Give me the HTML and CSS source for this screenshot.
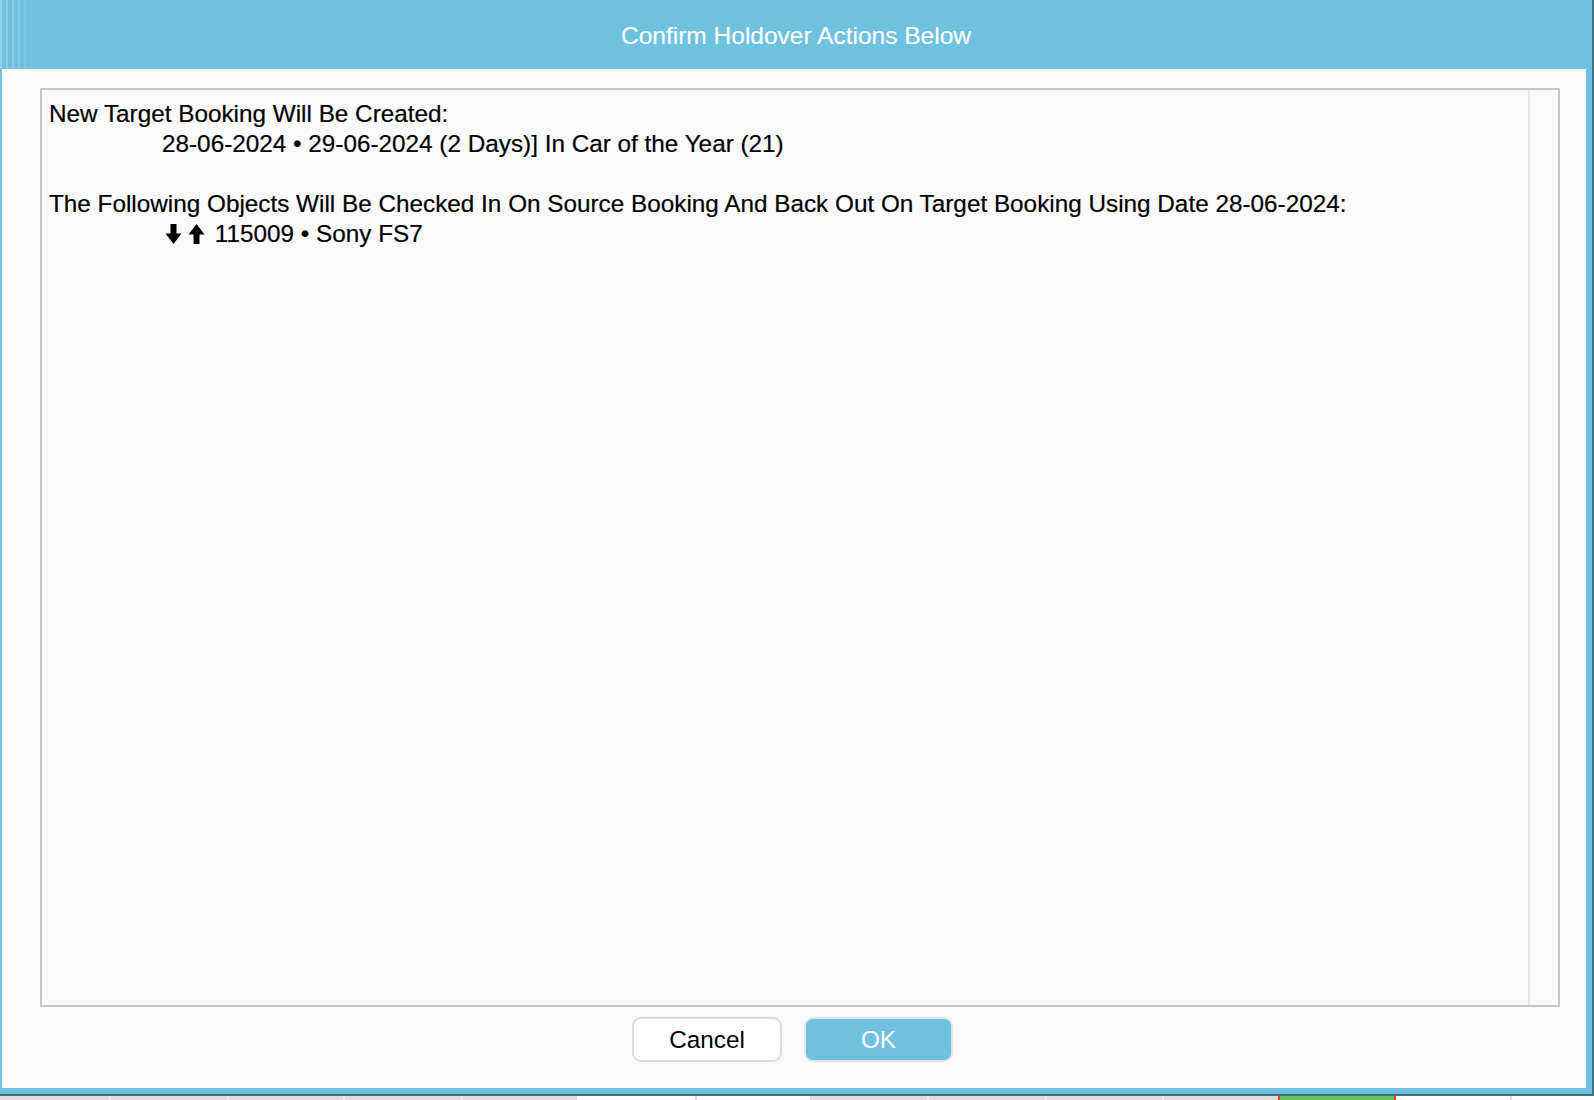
FILE: index.html
```html
<!DOCTYPE html>
<html lang="en">
<head>
<meta charset="utf-8">
<title>Confirm Holdover Actions Below</title>
<link rel="stylesheet" href="styles.css">
</head>
<body>
<div class="screen">
  <div class="dialog">
    <div class="titlebar">
      <span class="title">Confirm Holdover Actions Below</span>
    </div>
    <div class="dialog-body">
      <div class="textbox">
        <div class="content">
          <div class="line">New Target Booking Will Be Created:</div>
          <div class="line indent">28-06-2024 • 29-06-2024 (2 Days)] In Car of the Year (21)</div>
          <div class="line blank"></div>
          <div class="line">The Following Objects Will Be Checked In On Source Booking And Back Out On Target Booking Using Date 28-06-2024:</div>
          <div class="line indent"><svg class="arrow" width="23" height="22" viewBox="0 0 23 22"><path d="M8.5 1h6v9.5H19.5L11.5 21 3.5 10.5H8.5z"/></svg><svg class="arrow" width="23" height="22" viewBox="0 0 23 22"><path d="M11.5 1 19.5 11.5H14.5V21h-6V11.5H3.5z"/></svg> 115009 • Sony FS7</div>
        </div>
        <div class="scrolltrack"></div>
      </div>
      <div class="buttons">
        <button class="btn btn-cancel">Cancel</button>
        <button class="btn btn-ok">OK</button>
      </div>
    </div>
  </div>
  <div class="strip">
    <div class="cell gray w109"></div><div class="sep"></div>
    <div class="cell gray w116"></div><div class="sep"></div>
    <div class="cell gray w114"></div><div class="sep"></div>
    <div class="cell gray w116"></div><div class="sep"></div>
    <div class="cell gray w114"></div>
    <div class="cell white w118"></div><div class="sep dark"></div>
    <div class="cell white w113"></div>
    <div class="cell gray w117"></div><div class="sep"></div>
    <div class="cell gray w116"></div><div class="sep"></div>
    <div class="cell gray w115"></div><div class="sep"></div>
    <div class="cell gray w114"></div>
    <div class="sep red"></div><div class="cell green w114"></div><div class="sep red"></div>
    <div class="cell white w114"></div><div class="sep dark"></div>
    <div class="cell white grow"></div>
  </div>
</div>
</body>
</html>
```

FILE: styles.css
```css
html, body {
  margin: 0;
  padding: 0;
}

body {
  font-family: "Liberation Sans", Arial, Helvetica, sans-serif;
  background: #dedede;
}

.screen {
  width: 1594px;
  height: 1100px;
  overflow: hidden;
  background: #dedede;
}

.dialog {
  width: 1592px;
  height: 1094px;
  background: #6ec2df;
  display: flex;
  flex-direction: column;
  box-shadow: 2px 0 0 #3e7283, 0 2px 0 #3e7283, 2px 2px 0 #3e7283;
  position: relative;
}

.titlebar {
  position: relative;
  height: 69px;
  flex: none;
  display: flex;
  align-items: center;
  justify-content: center;
  padding-top: 2px;
  box-sizing: border-box;
}

.titlebar::before {
  content: "";
  position: absolute;
  left: 0;
  top: 0;
  width: 36px;
  height: 69px;
  background: repeating-linear-gradient(90deg, rgba(255,255,255,0.28) 0 2px, rgba(255,255,255,0) 2px 6px);
  -webkit-mask-image: linear-gradient(90deg, #000 0%, rgba(0,0,0,0) 100%);
  mask-image: linear-gradient(90deg, #000 0%, rgba(0,0,0,0) 100%);
}

.title {
  color: #ffffff;
  font-size: 24.5px;
  line-height: 30px;
  -webkit-text-stroke: 0.15px #ffffff;
}

.dialog-body {
  flex: 1;
  margin: 0 6px 6px 2px;
  background: #fafafa;
  padding: 19px 26px 26px 38px;
  display: flex;
  flex-direction: column;
  gap: 10px;
  min-height: 0;
}

.textbox {
  flex: 1;
  border: 2px solid #c6c6c6;
  background: #fafafa;
  display: flex;
  min-height: 0;
}

.content {
  flex: 1;
  padding: 9px 7px;
  color: #000;
  font-size: 24.3px;
  line-height: 30px;
  -webkit-text-stroke: 0.2px #000;
}

.line {
  white-space: nowrap;
  height: 30px;
}

.indent {
  padding-left: 113px;
}

.arrow {
  vertical-align: -3px;
  fill: #000;
}

.scrolltrack {
  width: 28px;
  flex: none;
  border-left: 2px solid #e8e8e8;
  background: #fafafa;
}

.buttons {
  height: 45px;
  flex: none;
  display: flex;
  justify-content: center;
  gap: 22px;
  padding-right: 15px;
}

.btn {
  font-family: "Liberation Sans", Arial, Helvetica, sans-serif;
  font-size: 24.3px;
  border-radius: 9px;
  height: 45px;
  padding: 0;
  box-sizing: border-box;
}

.btn-cancel {
  width: 150px;
  background: #ffffff;
  border: 2px solid #dcdcdc;
  color: #000;
}

.btn-ok {
  width: 149px;
  background: #6ec2df;
  border: 2px solid #dde6ea;
  color: #ffffff;
}

.strip {
  margin-top: 2px;
  height: 4px;
  display: flex;
}

.cell { height: 4px; flex: none; }
.gray { background: #dedede; }
.white { background: #ffffff; }
.green { background: #63c655; }
.grow { flex: 1; }
.w109 { width: 109px; }
.w113 { width: 113px; }
.w114 { width: 114px; }
.w115 { width: 115px; }
.w116 { width: 116px; }
.w117 { width: 117px; }
.w118 { width: 118px; }

.sep { width: 2px; height: 4px; flex: none; background: #ebebeb; }
.sep.dark { background: #dcdcdc; }
.sep.red { background: #e63b2e; }
```
